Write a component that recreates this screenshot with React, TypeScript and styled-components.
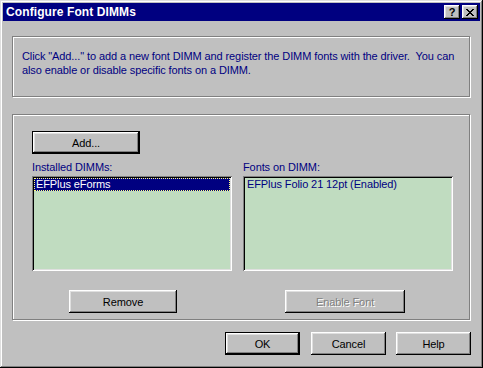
import styled, { createGlobalStyle } from 'styled-components'

const GlobalStyle = createGlobalStyle`
  html, body {
    margin: 0;
    padding: 0;
    background: #c0c0c0;
  }
  body {
    font-family: "Liberation Sans", Arial, sans-serif;
    font-size: 11px;
    letter-spacing: -0.1px;
  }
`

const Window = styled.div`
  box-sizing: border-box;
  width: 483px;
  height: 368px;
  padding: 3px;
  background: #c0c0c0;
  box-shadow: inset -1px -1px #000, inset 1px 1px #dfdfdf, inset -2px -2px #808080, inset 2px 2px #fff;
  display: flex;
  flex-direction: column;
`

const TitleBar = styled.div`
  height: 18px;
  background: #000080;
  display: flex;
  align-items: center;
  padding: 0 2px 0 3px;
  gap: 2px;
`

const Title = styled.div`
  flex: 1;
  color: #fff;
  font-weight: bold;
  font-size: 12px;
  letter-spacing: 0.1px;
  line-height: 18px;
`

const CaptionButton = styled.div`
  box-sizing: border-box;
  width: 16px;
  height: 14px;
  background: #c0c0c0;
  box-shadow: inset -1px -1px #000, inset 1px 1px #fff, inset -2px -2px #808080, inset 2px 2px #dfdfdf;
  display: flex;
  align-items: center;
  justify-content: center;
  font-weight: bold;
  font-size: 11px;
  line-height: 14px;
  color: #000;
`

const Body = styled.div`
  flex: 1;
  display: flex;
  flex-direction: column;
  padding: 15px 9px 0 9px;
`

const Group = styled.div<{ $height: number; $gap?: number }>`
  box-sizing: border-box;
  height: ${p => p.$height}px;
  margin: ${p => p.$gap ?? 0}px 1px 0 0;
  border: 1px solid #808080;
  box-shadow: inset 1px 1px #fff, 1px 1px #fff;
`

const Intro = styled.div`
  padding: 12px 0 0 9px;
  color: #000080;
  line-height: 14px;
  white-space: pre;
`

const Columns = styled.div`
  display: flex;
  gap: 11px;
  padding: 0 0 0 19px;
`

const Column = styled.div<{ $width: number }>`
  width: ${p => p.$width}px;
  display: flex;
  flex-direction: column;
`

const Label = styled.div`
  color: #000080;
  line-height: 14px;
  margin-bottom: 2px;
`

const ListBox = styled.div`
  box-sizing: border-box;
  height: 95px;
  padding: 2px;
  background: #c0dcc0;
  box-shadow: inset 1px 1px #808080, inset -1px -1px #fff, inset 2px 2px #000, inset -2px -2px #dfdfdf;
`

const ListItem = styled.div<{ $selected?: boolean }>`
  height: 13px;
  line-height: 13px;
  padding-left: 2px;
  color: ${p => (p.$selected ? '#fff' : '#000080')};
  background: ${p => (p.$selected ? '#000080' : 'transparent')};
  outline: ${p => (p.$selected ? '1px dotted #ffff80' : 'none')};
  outline-offset: -1px;
  white-space: nowrap;
`

const Button = styled.div<{ $width: number; $default?: boolean; $disabled?: boolean }>`
  box-sizing: border-box;
  width: ${p => p.$width}px;
  height: 23px;
  background: #c0c0c0;
  display: flex;
  align-items: center;
  justify-content: center;
  color: ${p => (p.$disabled ? '#808080' : '#000')};
  text-shadow: ${p => (p.$disabled ? '1px 1px #fff' : 'none')};
  border: ${p => (p.$default ? '1px solid #000' : 'none')};
  box-shadow: inset -1px -1px #000, inset 1px 1px #fff, inset -2px -2px #808080, inset 2px 2px #dfdfdf;
`

const AddRow = styled.div`
  padding: 16px 0 6px 19px;
`

const ButtonSlot = styled.div<{ $offset: number }>`
  margin: 19px 0 0 ${p => p.$offset}px;
`

const Footer = styled.div`
  display: flex;
  justify-content: flex-end;
  gap: 10px;
  margin-top: 12px;
`

const CloseGlyph = () => (
  <svg width="8" height="7" viewBox="0 0 8 7" shapeRendering="crispEdges">
    <path
      d="M0 0h2v1h-2zM6 0h2v1h-2zM1 1h2v1h-2zM5 1h2v1h-2zM2 2h4v1h-4zM3 3h2v1h-2zM2 4h4v1h-4zM1 5h2v1h-2zM5 5h2v1h-2zM0 6h2v1h-2zM6 6h2v1h-2z"
      fill="#000"
    />
  </svg>
)

export default function App() {
  return (
    <>
      <GlobalStyle />
      <Window>
        <TitleBar>
          <Title>Configure Font DIMMs</Title>
          <CaptionButton>?</CaptionButton>
          <CaptionButton>
            <CloseGlyph />
          </CaptionButton>
        </TitleBar>
        <Body>
          <Group $height={61}>
            <Intro>
              {'Click "Add..." to add a new font DIMM and register the DIMM fonts with the driver.  You can\nalso enable or disable specific fonts on a DIMM.'}
            </Intro>
          </Group>
          <Group $height={206} $gap={17}>
            <AddRow>
              <Button $width={108} $default>
                Add...
              </Button>
            </AddRow>
            <Columns>
              <Column $width={200}>
                <Label>Installed DIMMs:</Label>
                <ListBox>
                  <ListItem $selected>EFPlus eForms</ListItem>
                </ListBox>
                <ButtonSlot $offset={37}>
                  <Button $width={108}>Remove</Button>
                </ButtonSlot>
              </Column>
              <Column $width={210}>
                <Label>Fonts on DIMM:</Label>
                <ListBox>
                  <ListItem>EFPlus Folio 21 12pt (Enabled)</ListItem>
                </ListBox>
                <ButtonSlot $offset={42}>
                  <Button $width={120} $disabled>
                    Enable Font
                  </Button>
                </ButtonSlot>
              </Column>
            </Columns>
          </Group>
          <Footer>
            <Button $width={75} $default style={{ marginRight: 1 }}>
              OK
            </Button>
            <Button $width={75}>Cancel</Button>
            <Button $width={75}>Help</Button>
          </Footer>
        </Body>
      </Window>
    </>
  )
}
